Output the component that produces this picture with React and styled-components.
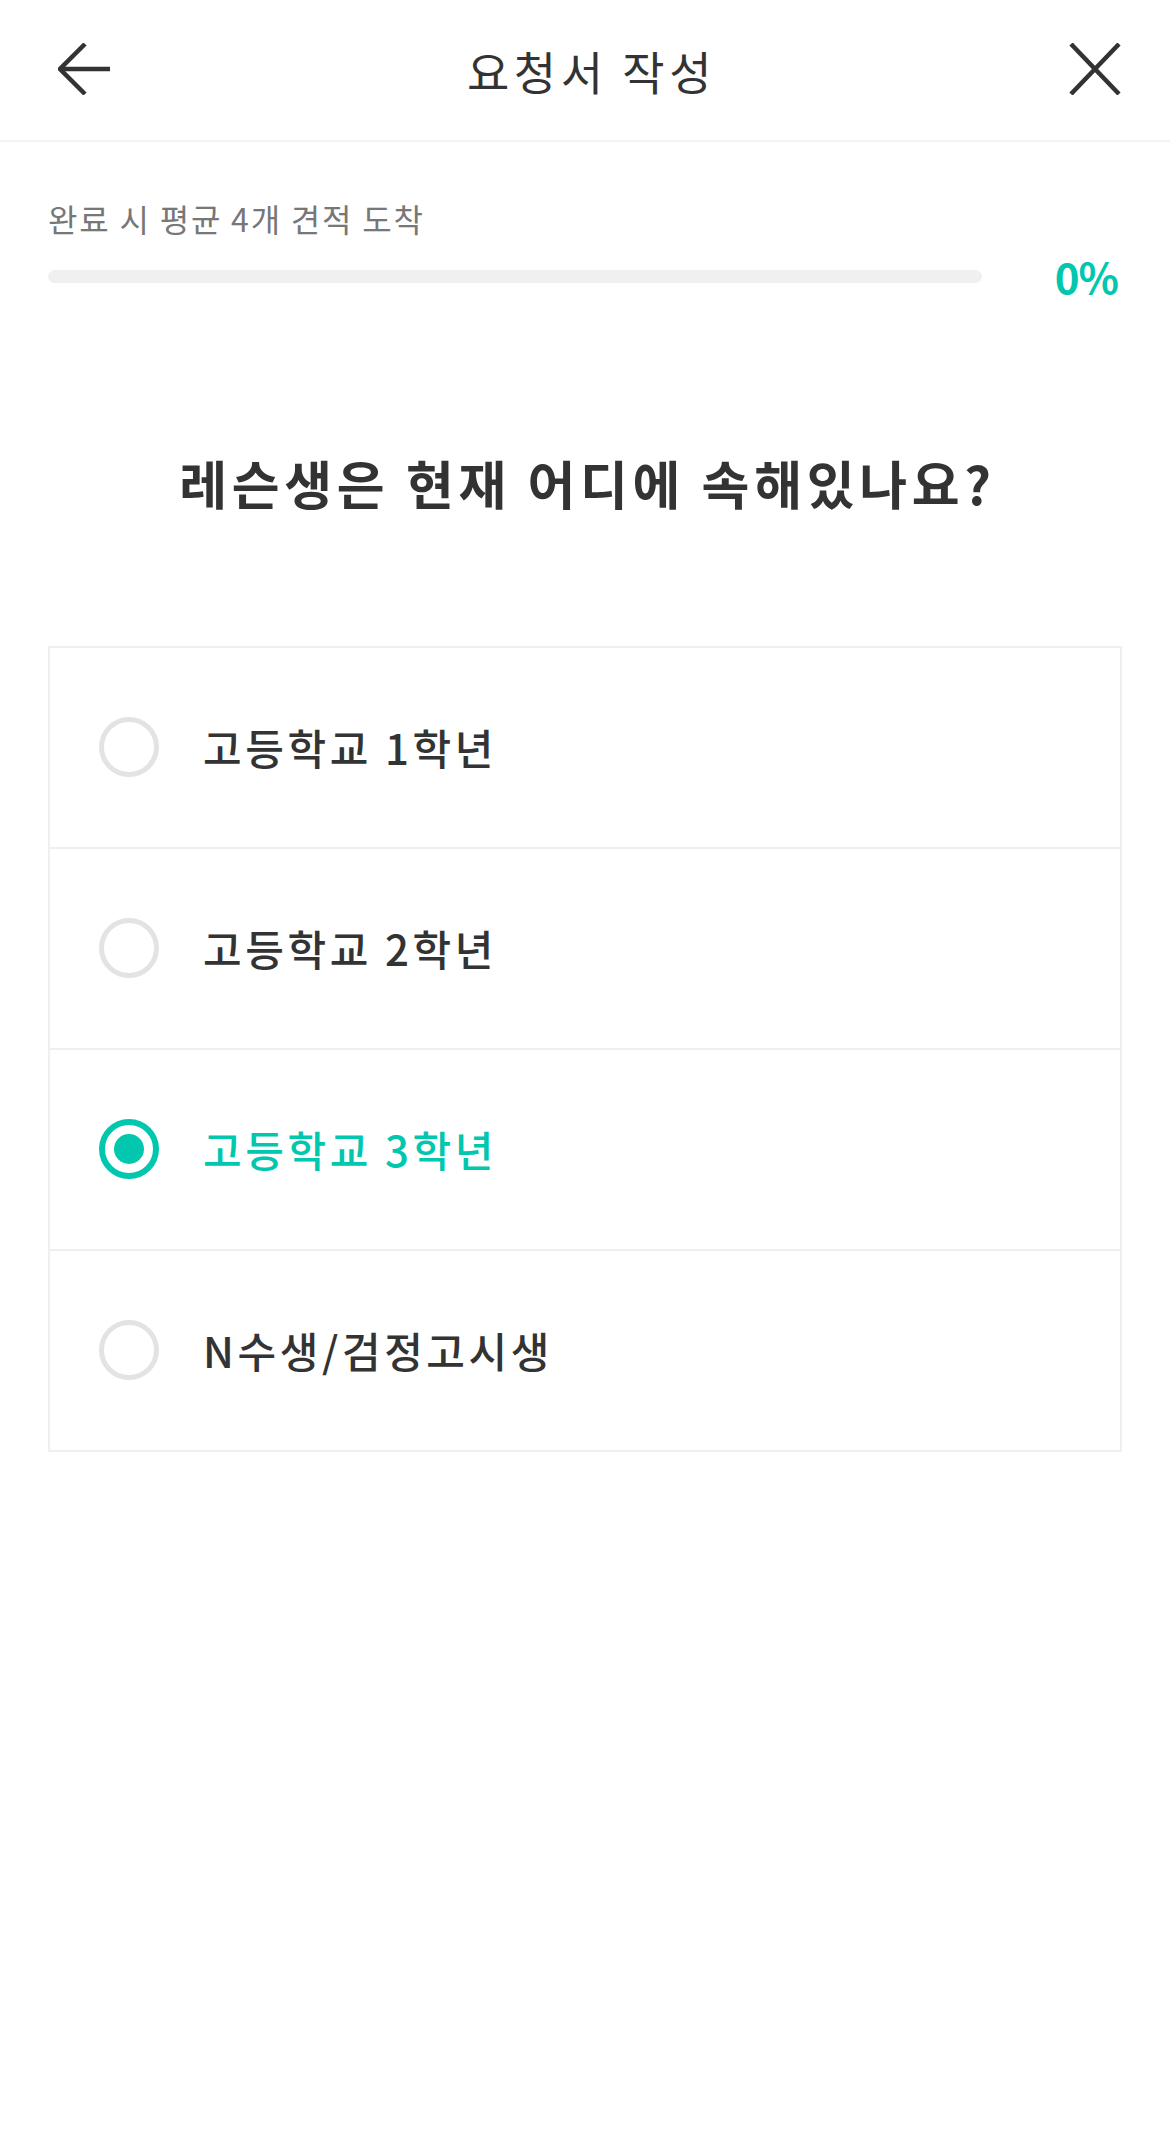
import React, { useState } from "react";
import styled, { createGlobalStyle } from "styled-components";

const TEAL = "#00c7ae";

const Global = createGlobalStyle`
  html, body { margin: 0; padding: 0; background: #ffffff; }
  body { font-family: "Noto Sans CJK KR", "Noto Sans", sans-serif; color: #333333; }
  * { box-sizing: border-box; }
`;

const Page = styled.div`
  width: 1170px;
  min-height: 2155px;
  background: #ffffff;
  display: flex;
  flex-direction: column;
`;

const Header = styled.header`
  height: 142px;
  display: grid;
  grid-template-columns: 1fr auto 1fr;
  align-items: center;
  padding: 0 49px 0 58px;
  border-bottom: 2px solid #f3f3f3;
`;

const IconButton = styled.button`
  width: 52px;
  height: 52px;
  padding: 0;
  border: 0;
  background: transparent;
  display: flex;
  align-items: center;
  justify-content: center;
  justify-self: ${(p) => (p.$end ? "end" : "start")};
  cursor: pointer;
  margin-top: -2px;
`;

const HeaderTitle = styled.h1`
  margin: 0 0 0 4px;
  font-size: 46px;
  font-weight: 400;
  line-height: 1.45;
  color: #333333;
  letter-spacing: 4.5px;
`;

const Progress = styled.section`
  padding: 53px 48px 0 48px;
  display: flex;
  flex-direction: column;
`;

const ProgressLabel = styled.p`
  margin: 0;
  font-size: 32px;
  line-height: 1.45;
  color: #777777;
  letter-spacing: 1.8px;
`;

const BarRow = styled.div`
  display: flex;
  align-items: center;
  margin-top: 5px;
`;

const Track = styled.div`
  flex: 1;
  height: 13px;
  border-radius: 7px;
  background: #f0f0f0;
  overflow: hidden;
`;

const Fill = styled.div`
  height: 100%;
  background: ${TEAL};
`;

const Percent = styled.span`
  width: 140px;
  padding-right: 4px;
  text-align: right;
  font-size: 42px;
  font-weight: 700;
  color: ${TEAL};
  line-height: 1.45;
  letter-spacing: -1px;
`;

const Question = styled.h2`
  margin: 138px 0 0;
  padding-left: 5px;
  text-align: center;
  font-size: 52px;
  font-weight: 700;
  line-height: 1.45;
  color: #333333;
  letter-spacing: 4.7px;
`;

const OptionList = styled.ul`
  list-style: none;
  margin: 125px 48px 0 48px;
  padding: 0;
  border: 2px solid #efefef;
`;

const OptionRow = styled.li`
  height: ${(p) => (p.$first ? "199px" : "201px")};
  display: flex;
  align-items: center;
  gap: 44px;
  padding-left: 49px;
  border-top: ${(p) => (p.$first ? "none" : "2px solid #efefef")};
  cursor: pointer;
`;

const Radio = styled.span`
  width: 60px;
  height: 60px;
  border-radius: 50%;
  border: ${(p) => (p.$checked ? `6px solid ${TEAL}` : "5px solid #e3e3e3")};
  display: flex;
  align-items: center;
  justify-content: center;
  flex-shrink: 0;
`;

const Dot = styled.span`
  width: 30px;
  height: 30px;
  border-radius: 50%;
  background: ${TEAL};
`;

const OptionText = styled.span`
  font-size: 42px;
  font-weight: 500;
  line-height: 1.45;
  color: ${(p) => (p.$checked ? TEAL : "#333333")};
  letter-spacing: 3.6px;
`;

const options = ["고등학교 1학년", "고등학교 2학년", "고등학교 3학년", "N수생/검정고시생"];

function BackIcon() {
  return (
    <svg width="52" height="52" viewBox="0 0 52 52" fill="none" stroke="#333333" strokeWidth="4.5" strokeLinecap="butt" strokeLinejoin="miter">
      <path d="M52 26 H2" />
      <path d="M27 1 L2 26 L27 51" />
    </svg>
  );
}

function CloseIcon() {
  return (
    <svg width="52" height="52" viewBox="0 0 52 52" fill="none" stroke="#333333" strokeWidth="4.5">
      <path d="M2 1 L50 51" />
      <path d="M50 1 L2 51" />
    </svg>
  );
}

export default function App() {
  const [selected, setSelected] = useState(2);
  const progress = 0;
  return (
    <Page>
      <Global />
      <Header>
        <IconButton aria-label="뒤로">
          <BackIcon />
        </IconButton>
        <HeaderTitle>요청서 작성</HeaderTitle>
        <IconButton $end aria-label="닫기">
          <CloseIcon />
        </IconButton>
      </Header>
      <Progress>
        <ProgressLabel>완료 시 평균 4개 견적 도착</ProgressLabel>
        <BarRow>
          <Track>
            <Fill style={{ width: `${progress}%` }} />
          </Track>
          <Percent>{progress}%</Percent>
        </BarRow>
      </Progress>
      <Question>레슨생은 현재 어디에 속해있나요?</Question>
      <OptionList>
        {options.map((o, i) => (
          <OptionRow key={o} $first={i === 0} onClick={() => setSelected(i)}>
            <Radio $checked={selected === i}>{selected === i && <Dot />}</Radio>
            <OptionText $checked={selected === i}>{o}</OptionText>
          </OptionRow>
        ))}
      </OptionList>
    </Page>
  );
}
